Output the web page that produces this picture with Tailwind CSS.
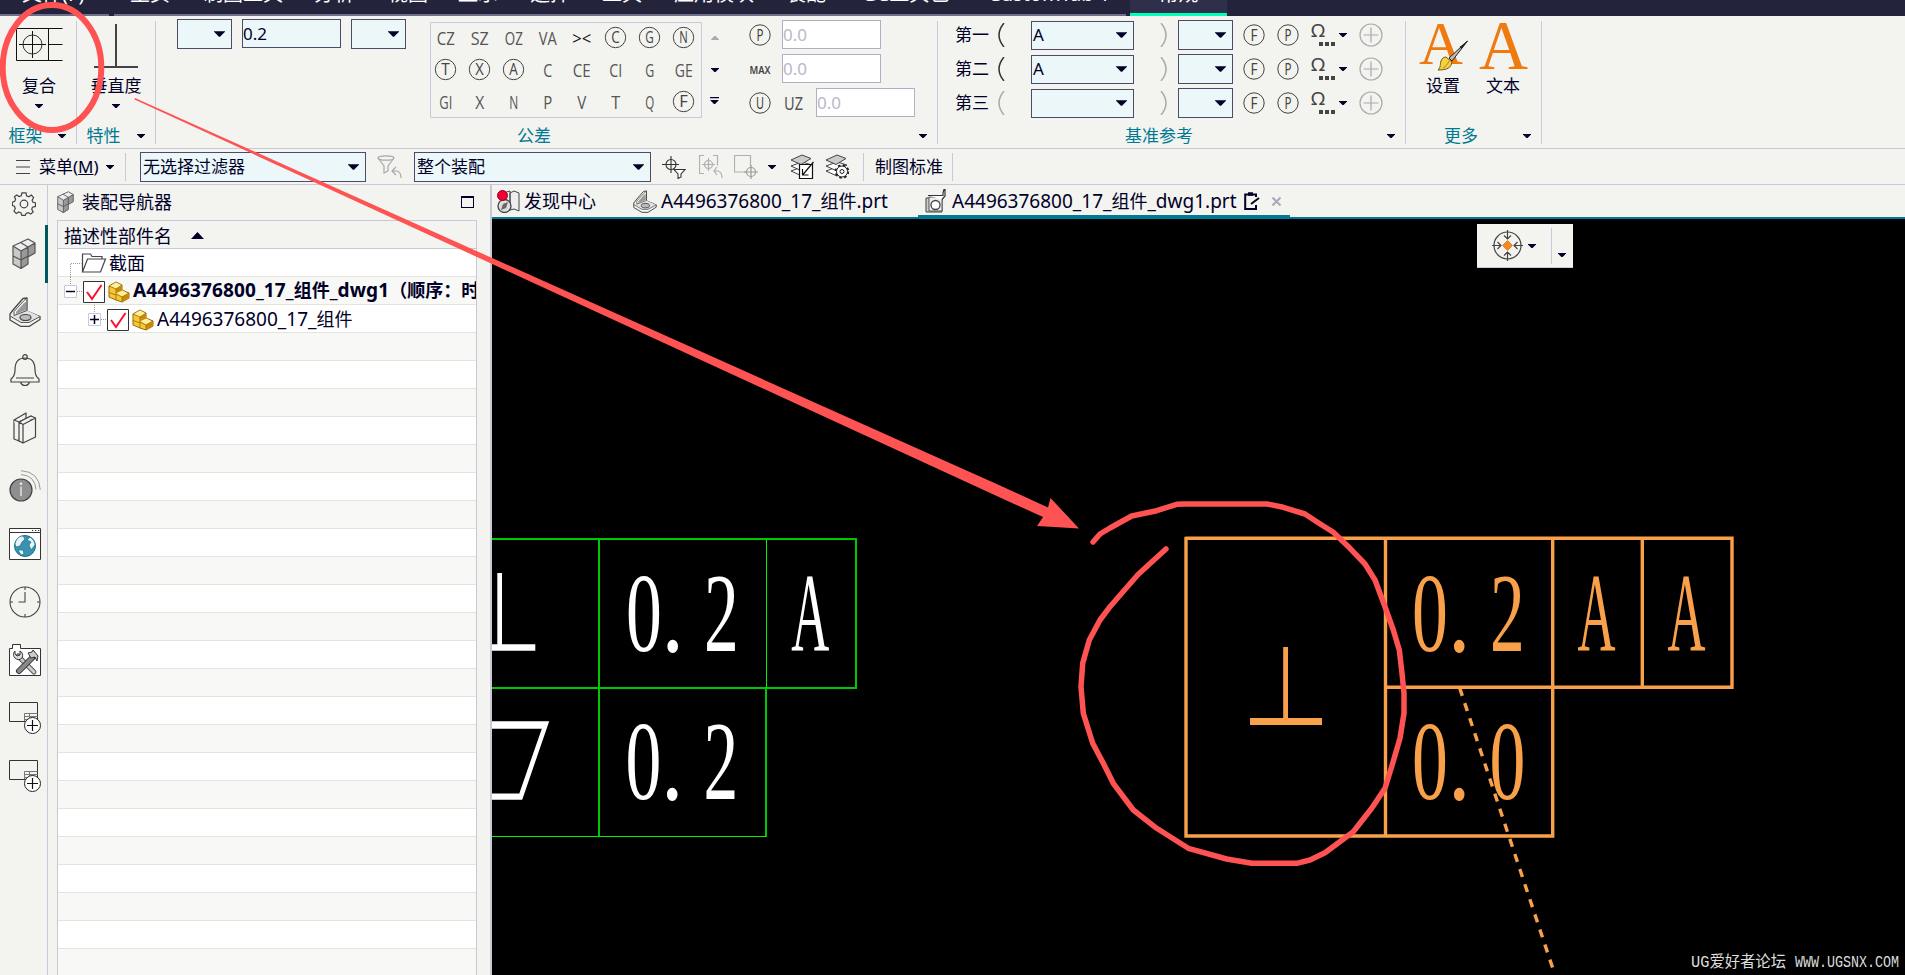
<!DOCTYPE html>
<html lang="zh-CN">
<head>
  <meta charset="UTF-8" />
  <meta name="viewport" content="width=device-width, initial-scale=1.0"/>
  <title>A4496376800_17_组件_dwg1.prt</title>
  <script src="https://cdn.jsdelivr.net/npm/@tailwindcss/browser@4"></script>
</head>
<body class="relative flex h-[975px] w-[1905px] flex-col overflow-hidden bg-[#f3f3ef] font-['Noto_Sans','Noto_Sans_CJK_SC',sans-serif] text-[17px] leading-5 text-[#000028]">

  <!-- shared icons -->
  <svg class="hidden">
    <defs>
      <linearGradient id="metal" x1="0" y1="0" x2="1" y2="1"><stop offset="0" stop-color="#f4f4f4"/><stop offset="1" stop-color="#8a8a8a"/></linearGradient>
      <linearGradient id="sheet" x1="0" y1="0" x2="1" y2="1"><stop offset="0" stop-color="#ededf2"/><stop offset="1" stop-color="#fff"/></linearGradient>
    </defs>
    <symbol id="small-arrow" viewBox="0 0 8 4"><path d="M0 0h8v.6L4.6 4H3.4L0 .6z" fill="#000028"/></symbol>
    <symbol id="big-arrow" viewBox="0 0 12 6"><path d="M0 0h12v.6L6.6 6H5.4L0 .6z" fill="#000028"/></symbol>
    <symbol id="blocks" viewBox="0 0 24 31">
      <path d="M1 8l15-7 7 4v10l-7 4v7l-7 4.500L1 26z" fill="#c9c9c9"/>
      <path d="M1 8l7.500-3.500L16 1l7 4-7 4-7 4z" fill="#eee"/>
      <path d="M9 13l7-4 7-4v10l-7 4v7l-7 4.500z" fill="#999"/>
      <path d="M1 8l15-7 7 4v10l-7 4v7l-7 4.500L1 26zM1 8l8 5 14-8M9 13v17.500M1 18l8 4 7-4M16 9v10M8.500 4.500L16 9" fill="none" stroke="#555" stroke-width="1.200" stroke-linejoin="round"/>
    </symbol>
    <symbol id="bracket" viewBox="0 0 32 30">
      <path d="M1 17L4 13 14 1.500 18 1v13l13 5.500v3L20 29.500h-8L1 23z" fill="url(#metal)" stroke="#484848" stroke-width="1.300" stroke-linejoin="round"/>
      <path d="M18 13.500l13 6-11 6h-8L1 19l4-1z" fill="#e2e2e2"/>
      <path d="M5 14.500L14.500 4 18 1M5 14.500v4L18 13.500M1 19l11 6.500h8L31 19.500" fill="none" stroke="#555" stroke-width="1"/>
      <path d="M7 15l8-9 2-1v8L7 17z" fill="#999"/>
      <ellipse cx="16.500" cy="20.500" rx="5.500" ry="3" fill="#bbb" stroke="#444" stroke-width="1.200"/>
    </symbol>
    <symbol id="cubes" viewBox="0 0 22 22">
      <path d="M1 5l7-4 6 3v5l7 3v5l-7 4-6-2-7-3z" fill="#f6c838" stroke="#9c6b00" stroke-width="1" stroke-linejoin="round"/>
      <path d="M2 5l6-3.500 5.500 2.800L8 8zM8.500 12l6-2.500 5.500 3-6 3z" fill="#fff0a0"/>
      <path d="M8 8l6-3.500v5L8.500 12zM14 16l7-3.500V17l-7 4z" fill="#c98a0c"/>
      <path d="M8 8v11M1 5l7 3 6-4M8 13l6 3 7-4M14 16v5M1 11.500l7 2.500" fill="none" stroke="#9c6b00" stroke-width=".8"/>
    </symbol>
    <symbol id="check" viewBox="0 0 22 22">
      <path d="M.5.5h21v21H.5z" fill="#fff" stroke="#333"/>
      <path d="M4 11l5 7L18.500 4" fill="none" stroke="#ff1030" stroke-width="2"/>
    </symbol>
    <symbol id="add-sheet" viewBox="0 0 32 32">
      <path d="M.5.5h28v19H.5z" fill="url(#sheet)" stroke="#333"/>
      <path d="M15.500 19v-7.500h13M15.500 14.500h13M15.500 17.500h13M20.500 11.500v6" fill="none" stroke="#777"/>
      <circle cx="23.500" cy="23.500" r="8" fill="#fff" stroke="#222"/>
      <path d="M18 23.500h11M23.500 18v11" stroke="#111" stroke-width="1.200"/>
    </symbol>
    <symbol id="layers" viewBox="0 0 24 25">
      <g stroke="#444" stroke-width="1" stroke-linejoin="round">
        <path d="M1 17l11-4 10 3-10 6z" fill="#fff"/><path d="M1 12l11-4 10 3-10 6z" fill="#fff"/><path d="M1 6l11-5 9 3.500-10 6z" fill="#ccc"/>
      </g>
    </symbol>
  </svg>

  <!-- menu bar -->
  <nav class="flex h-4 shrink-0 overflow-hidden bg-[#23233c] text-[20px] text-white">
    <div class="h-4 w-[109px] border-b-2 border-[#6f6f8a] pl-[22px]"><span class="-mt-4 block">文件(F)</span></div>
    <div class="ml-[5px] flex h-4 w-[1012px] border-b-2 border-[#6f6f8a] pl-4 whitespace-nowrap">
      <span class="-mt-4 w-[73px] shrink-0">主页</span>
      <span class="-mt-4 w-[111px] shrink-0">制图工具</span>
      <span class="-mt-4 w-[74px] shrink-0">分析</span>
      <span class="-mt-4 w-[70px] shrink-0">视图</span>
      <span class="-mt-4 w-[72px] shrink-0">显示</span>
      <span class="-mt-4 w-[72px] shrink-0">选择</span>
      <span class="-mt-4 w-[72px] shrink-0">工具</span>
      <span class="-mt-4 w-[112px] shrink-0">应用模块</span>
      <span class="-mt-4 w-[76px] shrink-0">装配</span>
      <span class="-mt-4 w-[126px] shrink-0">GC工具包</span>
      <span class="-mt-4 shrink-0">CustomTab 1</span>
    </div>
    <div class="ml-1 h-4 w-[97px] border-b-[3px] border-[#00ffb9] bg-[#2f2f4b] text-center"><span class="-mt-4 block">常规</span></div>
  </nav>

  <!-- ribbon -->
  <header class="flex h-[133px] shrink-0 border-b border-[#c8c8d8] pt-[5px]">
    <section class="flex h-[123px] w-[77px] flex-col border-r border-[#c8c8d8]">
      <div class="flex flex-1 flex-col pl-4">
        <svg class="mt-[7px] h-[34px] w-[47px]" viewBox="0 0 47 34" fill="none" stroke="#111"><path d="M46.500.5H.5v32h46M32.500.5v32M32.500 16.500h14M3 16.500h27M16.500 3v27"/><circle cx="16.500" cy="16.500" r="9.500" stroke="#333"/></svg>
        <span class="mt-[14px] pl-1.5">复合</span>
        <svg class="mt-2 ml-[19px] h-1 w-2"><use href="#small-arrow"/></svg>
      </div>
      <div class="flex h-4 items-center text-[#007a94]"><span class="flex-1 text-center leading-4">框架</span><svg class="mr-[10px] ml-[7px] h-1 w-2"><use href="#small-arrow"/></svg></div>
    </section>
    <section class="flex h-[123px] w-[79px] flex-col border-r border-[#c8c8d8]">
      <div class="flex flex-1 flex-col items-center">
        <svg class="mt-[3px] h-[44px] w-[44px]" viewBox="0 0 44 44" fill="none" stroke="#444" stroke-width="2"><path d="M22 0v42M0 43h44"/></svg>
        <span class="mt-[8px] whitespace-nowrap">垂直度</span>
        <svg class="mt-2 h-1 w-2"><use href="#small-arrow"/></svg>
      </div>
      <div class="flex h-4 items-center text-[#007a94]"><span class="flex-1 text-center leading-4">特性</span><svg class="mr-[10px] ml-[7px] h-1 w-2"><use href="#small-arrow"/></svg></div>
    </section>

    <!-- tolerance -->
    <section class="flex h-[123px] w-[782px] flex-col border-r border-[#c8c8d8]">
      <div class="flex flex-1 items-start">
        <div class="-mt-0.5 ml-[21px] flex h-[30px] w-[55px] items-center justify-end border border-[#4c4c68] bg-[#ebf7f8] pr-[6px]"><svg class="h-[6px] w-[11px]"><use href="#big-arrow"/></svg></div>
        <div class="-mt-0.5 ml-[10px] h-[29px] w-[99px] border border-[#4c4c68] bg-[#ebf7f8] leading-[28px]">0.2</div>
        <div class="-mt-0.5 ml-[10px] flex h-[30px] w-[55px] items-center justify-end border border-[#4c4c68] bg-[#ebf7f8] pr-[6px]"><svg class="h-[6px] w-[11px]"><use href="#big-arrow"/></svg></div>
        <svg id="tolerances" class="mt-px ml-6 h-[96px] w-[272px] font-['Open_Sans','Noto_Sans',sans-serif] text-[16px]" viewBox="0 0 272 96"><path d="M.5.5h271v95H.5z" fill="none" stroke="#c8c8d8"/></svg>
        <div class="mt-[15px] ml-2 flex flex-col items-center">
          <svg class="h-1 w-2 opacity-30" viewBox="0 0 8 4"><path d="M0 4h8v-.6L4.600 0H3.400L0 3.400z" fill="#000028"/></svg>
          <svg class="mt-7 h-1 w-2"><use href="#small-arrow"/></svg>
          <svg class="mt-[25px] h-[7px] w-[9px]" viewBox="0 0 9 7" fill="#000028"><path d="M0 0h9v1.200H0zM.5 3h8v.6L5 7H4L.5 3.600z"/></svg>
        </div>
        <div class="-mt-px ml-[30px] flex flex-col gap-[5px]">
          <div class="flex h-[29px] items-center">
            <svg class="h-[22px] w-[22px]" viewBox="0 0 22 22"><circle cx="11" cy="11" r="10.200" fill="none" stroke="#444"/><text x="11" y="16.500" text-anchor="middle" font-size="15.500" textLength="7" lengthAdjust="spacingAndGlyphs" fill="#444">P</text></svg>
            <div class="ml-[11px] h-[29px] w-[99px] border border-[#b0b0c4] bg-white leading-[28px] text-[#b8b8c8]">0.0</div>
          </div>
          <div class="flex h-[29px] items-center">
            <svg class="h-[22px] w-[22px]" viewBox="0 0 22 22"><text x="0.500" y="15.500" font-size="11" font-weight="600" textLength="21" lengthAdjust="spacingAndGlyphs" fill="#444">MAX</text></svg>
            <div class="ml-[11px] h-[29px] w-[99px] border border-[#b0b0c4] bg-white leading-[28px] text-[#b8b8c8]">0.0</div>
          </div>
          <div class="flex h-[29px] items-center">
            <svg class="h-[22px] w-[56px]" viewBox="0 0 56 22"><circle cx="11" cy="11" r="10.200" fill="none" stroke="#444"/><text x="11" y="16.500" text-anchor="middle" font-size="15.500" textLength="8" lengthAdjust="spacingAndGlyphs" fill="#444">U</text><text x="35" y="18" font-size="18.500" textLength="19" lengthAdjust="spacingAndGlyphs" fill="#555">UZ</text></svg>
            <div class="ml-[11px] h-[29px] w-[99px] border border-[#b0b0c4] bg-white leading-[28px] text-[#b8b8c8]">0.0</div>
          </div>
        </div>
      </div>
      <div class="flex h-4 items-center text-[#007a94]"><span class="flex-1 text-center leading-4">公差</span><svg class="mr-[10px] ml-[7px] h-1 w-2"><use href="#small-arrow"/></svg></div>
    </section>

    <!-- datum reference -->
    <section class="flex h-[123px] w-[468px] flex-col border-r border-[#c8c8d8]">
      <div id="datums" class="-mt-px flex flex-1 flex-col gap-[4px]"></div>
      <div class="flex h-4 items-center text-[#007a94]"><span class="flex-1 text-center leading-4">基准参考</span><svg class="mr-[10px] ml-[7px] h-1 w-2"><use href="#small-arrow"/></svg></div>
    </section>

    <section class="flex h-[123px] w-[136px] flex-col border-r border-[#c8c8d8]">
      <div class="flex flex-1 pl-[13px]">
        <div class="flex w-[50px] flex-col items-center">
          <svg class="mt-px h-[49px] w-[50px]" viewBox="0 0 50 49">
            <text x="0" y="42" font-family="Liberation Serif" font-size="62" textLength="44" lengthAdjust="spacingAndGlyphs" fill="#ee7a10">A</text>
            <path d="M48.500 19L30 36l3 3z" fill="#bbb" stroke="#222" stroke-width="1"/>
            <path d="M48.500 19l-8 6 2 2z" fill="#222"/>
            <path d="M27 35l6 5c-1 6-5 8-14 8 3-3 2-6 3-9 1-3 3-4 5-4z" fill="#f8d040" stroke="#6b5a10"/>
            <path d="M24 46c3-2 5-4 6-7" fill="none" stroke="#a88a18"/>
          </svg>
          <span class="mt-[5px] -ml-0.5">设置</span>
        </div>
        <div class="ml-[9px] flex w-[50px] flex-col items-center">
          <svg class="mt-px h-[49px] w-[50px]" viewBox="0 0 50 49"><text x="1" y="47" font-family="Liberation Serif" font-size="69" textLength="49" lengthAdjust="spacingAndGlyphs" fill="#ee7a10">A</text></svg>
          <span class="mt-[5px]">文本</span>
        </div>
      </div>
      <div class="flex h-4 items-center text-[#007a94]"><span class="flex-1 text-center leading-4">更多</span><svg class="mr-[10px] ml-[7px] h-1 w-2"><use href="#small-arrow"/></svg></div>
    </section>
  </header>

  <!-- selection bar -->
  <div class="flex h-9 shrink-0 items-center border-b border-[#c8c8d8]">
    <svg class="ml-4 h-[14px] w-[14px]" viewBox="0 0 14 14" stroke="#444"><path d="M0 .5h14M0 7h14M0 13.500h14"/></svg>
    <span class="ml-[9px] w-[62px]">菜单(<u>M</u>)</span>
    <svg class="ml-[5px] h-1 w-2"><use href="#small-arrow"/></svg>
    <div class="ml-[11px] h-7 w-px bg-[#c8c8d8]"></div>
    <div class="ml-[14px] flex h-[30px] w-[226px] items-center justify-between border border-[#4c4c68] bg-[#ebf7f8] pr-[6px] pl-0.5"><span>无选择过滤器</span><svg class="h-[6px] w-[11px]"><use href="#big-arrow"/></svg></div>
    <svg class="ml-[11px] h-6 w-[25px]" viewBox="0 0 25 24" fill="none" stroke="#a8a8a8" stroke-width="1.200"><ellipse cx="9" cy="3" rx="8" ry="2.200"/><path d="M1 3l6 8v7l4-2v-5l6-8M19 12l-4 4 4 4M15 16h5q4 1 4 7"/></svg>
    <div class="ml-3 flex h-[30px] w-[237px] items-center justify-between border border-[#4c4c68] bg-[#ebf7f8] pr-[6px] pl-0.5"><span>整个装配</span><svg class="h-[6px] w-[11px]"><use href="#big-arrow"/></svg></div>
    <svg class="ml-[11px] h-6 w-6" viewBox="0 0 24 24" fill="none" stroke="#333" stroke-width="1.100"><circle cx="9" cy="9.500" r="5"/><path d="M0 9.500h17M9 1v17"/><path d="M12 14.500h11l-4 4.500v3l-3 1.500V19z" fill="#fff"/></svg>
    <svg class="ml-[13px] h-6 w-6" viewBox="0 0 24 24" fill="none" stroke="#b0b0b0" stroke-width="1.200"><path d="M5 .5H.5v18H5M14 .5h4.500v10"/><circle cx="9.500" cy="9.500" r="4"/><path d="M3 9.500h13M9.500 3v13M18 12l-3 4 3 4M15 16h4q4 1 4 7"/></svg>
    <svg class="ml-[11px] h-6 w-6" viewBox="0 0 24 24" fill="none" stroke="#b0b0b0" stroke-width="1.200"><path d="M12 17H.5V.5h16V11"/><circle cx="17" cy="17" r="4.500" stroke="#999"/><path d="M10 17h14M17 10v14" stroke="#999"/></svg>
    <svg class="ml-[10px] h-1 w-2"><use href="#small-arrow"/></svg>
    <svg class="ml-[14px] h-[25px] w-6" viewBox="0 0 24 25"><use href="#layers"/><path d="M9.500 10.500h13v14h-13z" fill="#fff" stroke="#111" stroke-width="1.200"/><path d="M23.500 8L13 20.500M12.500 15v6h6" fill="none" stroke="#111" stroke-width="1.200"/></svg>
    <svg class="ml-[11px] h-[25px] w-6" viewBox="0 0 24 25"><use href="#layers"/><circle cx="17" cy="17.500" r="6.300" fill="none" stroke="#222" stroke-width="2" stroke-dasharray="2.500 2.450"/><circle cx="17" cy="17.500" r="5.500" fill="#fff" stroke="#222"/><circle cx="17" cy="17.500" r="2" fill="none" stroke="#222"/></svg>
    <div class="ml-[14px] h-7 w-px bg-[#c8c8d8]"></div>
    <span class="ml-[11px]">制图标准</span>
    <div class="ml-[9px] h-7 w-px bg-[#c8c8d8]"></div>
  </div>

  <div class="flex min-h-0 flex-1">
    <!-- resource bar -->
    <aside class="flex w-12 shrink-0 flex-col items-center border-r border-[#c8c8d8]">
      <svg class="mt-[7px] h-6 w-6" viewBox="0 0 24 24" fill="none" stroke="#444" stroke-width="1.200"><path d="M10 .8h4l.6 3 2.200 1L19.400 3l2.200 2.500-1.500 2.700.7 1.800 2.700 1v3.400l-3 .8-.8 2 1.500 2.600-2.500 2.300-2.600-1.500-2 .8-.8 2h-3.500l-.8-2.500-2.200-.9-2.500 1.400-2.300-2.300 1.300-2.600-.9-2.200-2-.8v-3.200l2.300-1 .9-2-1.200-2.500L4.600 3l2.600 1.600 2.100-.9z"/><circle cx="12" cy="12" r="3.800"/></svg>
      <div class="mt-[9px] -mr-px flex h-[58px] w-[48px] items-center justify-center border-r-[3px] border-[#00575e] pb-0.5 pl-[3px]"><svg class="h-[31px] w-6"><use href="#blocks"/></svg></div>
      <svg class="mt-[14px] ml-[3px] h-[30px] w-8"><use href="#bracket"/></svg>
      <svg class="mt-[27px] ml-0.5 h-8 w-[30px]" viewBox="0 0 30 32" fill="none" stroke="#444" stroke-width="1.200"><path d="M1 28v-3q4-3 4-9c0-9 4-12 10-12s10 3 10 12q0 6 4 9v3zM6 24h18M10.500 28q1 3.500 4.500 3.500t4.500-3.500"/><circle cx="15" cy="3" r="2.300"/></svg>
      <svg class="mt-[26px] ml-0.5 h-8 w-6" viewBox="0 0 24 32" fill="#f3f3ef" stroke="#444" stroke-width="1.200" stroke-linejoin="round"><path d="M1 8L13 1v22L6 29l-5-2z"/><path d="M6 10L18 4v22l-9 4-3-1.500z"/><path d="M1 8l5 2v18.500M6 10l4 2.500v18.500L6 29zM10 12.500L22.500 6v19L10 31zM6 10l12-6 4.500 2"/></svg>
      <svg class="mt-[26px] ml-0.5 h-8 w-8" viewBox="0 0 32 32"><circle cx="12" cy="20" r="11" fill="#8f8f8f" stroke="#444" stroke-width="1.200"/><path d="M12 16.500v9.500M12 12.500v2.500M10.800 13.700h2.400" stroke="#fff" stroke-width="1.100"/><path d="M12 4.500q14 1 15 15M12 .7q18 1 19.300 19" fill="none" stroke="#999"/></svg>
      <svg class="mt-[26px] ml-0.5 h-8 w-8" viewBox="0 0 32 32"><path d="M.5.5h31v31H.5zM.5 4.500h31" fill="#fff" stroke="#333"/><path d="M23 2.500h1.200M26 2.500h1.200M29 2.500h1.200" stroke="#333"/><circle cx="16" cy="18" r="10.500" fill="#3a93ae" stroke="#14718f"/><path d="M6 16c1-5 4-8 8-8l2 3-3 3-2 4-4 1zM21 9c3 2 5 5 5 8l-4 5-2-5 2-3-4-2zM9 22l5 0 1 4-3 1z" fill="#e9f2f4" stroke="#14718f" stroke-width=".7"/></svg>
      <svg class="mt-[26px] ml-0.5 h-8 w-8" viewBox="0 0 32 32" fill="none" stroke="#444" stroke-width="1.100"><circle cx="16" cy="16" r="15"/><path d="M16 1v3M16 28v3M1 16h3M28 16h3M16 6v10H9.500"/></svg>
      <svg class="mt-[26px] ml-0.5 h-8 w-8" viewBox="0 0 32 32"><path d="M.5 31.500v-27h3V.5h8v4h20v27z" fill="#fff" stroke="#333"/><path d="M9 12l16 16" stroke="#555" stroke-width="5" stroke-linecap="round"/><path d="M9 12l16 16" stroke="#ccc" stroke-width="3" stroke-linecap="round"/><path d="M6 7c-2 2-2 5 0 7s5 2 6.500.5S14 10 12.500 8L11 7v4l-3 1-2-2z" fill="#ddd" stroke="#333"/><path d="M24 13L10 27" stroke="#333" stroke-width="6" stroke-linecap="round"/><path d="M23 14L10 27" stroke="#888" stroke-width="4" stroke-linecap="round"/><path d="M19 9l4-1 1-2 5 6-1 5-2-4-4 1z" fill="#ccc" stroke="#333"/></svg>
      <svg class="mt-[26px] ml-0.5 h-8 w-8"><use href="#add-sheet"/></svg>
      <svg class="mt-[26px] ml-0.5 h-8 w-8"><use href="#add-sheet"/></svg>
    </aside>

    <!-- assembly navigator -->
    <section class="flex w-[444px] shrink-0 flex-col border-r-2 border-[#c8c8d8] text-[18px]">
      <div class="flex h-[35px] items-center pb-0.5 pl-[9px]">
        <svg class="h-[22px] w-[17px]"><use href="#blocks"/></svg>
        <span class="ml-2">装配导航器</span>
        <div class="mr-4 ml-auto h-3 w-[13px] border border-t-2 border-[#000028]"></div>
      </div>
      <div id="tree" class="mr-[13px] ml-[9px] flex min-h-0 flex-1 flex-col overflow-hidden border border-b-0 border-[#c8c8d8]">
        <div class="flex h-7 shrink-0 items-center border-b border-[#c8c8d8] pt-0.5 pl-1.5">描述性部件名<svg class="ml-[19px] h-[7px] w-[13px]" viewBox="0 0 13 7"><path d="M6.500 0L13 7H0z" fill="#000028"/></svg></div>
        <div class="flex h-7 shrink-0 items-center border-b border-[#e4e4dc] bg-white">
          <svg class="h-7 w-[50px]" viewBox="0 0 50 28" fill="none" stroke="#444"><path d="M12.500 28V14.500h11" stroke="#999" stroke-dasharray="1 1"/><path d="M24.500 23V5l8 0 1.500 2.500h10V10M24.500 23l5-13h18l-5 13z" stroke-width="1.200"/></svg>
          <span class="ml-px">截面</span>
        </div>
        <div class="flex h-7 shrink-0 items-center border-b border-[#e4e4dc] bg-[#f8f8f6]">
          <svg class="h-7 w-[25px] shrink-0" viewBox="0 0 25 28" fill="none"><path d="M12.500 0v8M19 14.500h5" stroke="#999" stroke-dasharray="1 1"/><path d="M6.500 8.500h12v12h-12z" fill="#fff" stroke="#c8c8d8"/><path d="M8 14.500h9" stroke="#000028" stroke-width="1.500"/></svg>
          <svg class="mt-0.5 h-[22px] w-[22px] shrink-0"><use href="#check"/></svg>
          <svg class="mt-0.5 ml-[3px] h-[22px] w-[22px] shrink-0"><use href="#cubes"/></svg>
          <span class="ml-[3px] shrink-0 pb-0.5 font-bold whitespace-nowrap"><span class="text-[19px] tracking-[0.1px]">A4496376800_17_</span>组件<span class="text-[19px] tracking-[0.1px]">_dwg1</span>（顺序：时间顺序）</span>
        </div>
        <div class="flex h-7 shrink-0 items-center border-b border-[#e4e4dc] bg-white">
          <svg class="h-7 w-[49px] shrink-0" viewBox="0 0 49 28" fill="none"><path d="M36.500 0v8M43 14.500h6" stroke="#999" stroke-dasharray="1 1"/><path d="M30.500 8.500h12v12h-12z" fill="#fff" stroke="#c8c8d8"/><path d="M32 14.500h9M36.500 10v9" stroke="#000028" stroke-width="1.500"/></svg>
          <svg class="mt-0.5 h-[22px] w-[22px] shrink-0"><use href="#check"/></svg>
          <svg class="mt-0.5 ml-[3px] h-[22px] w-[22px] shrink-0"><use href="#cubes"/></svg>
          <span class="ml-[3px] shrink-0 whitespace-nowrap"><span class="text-[19px]">A4496376800_17_</span>组件</span>
        </div>
      </div>
    </section>

    <!-- graphics window -->
    <main class="flex min-w-0 flex-1 flex-col">
      <div class="flex h-[34px] shrink-0 border-b-2 border-[#007a94] text-[18px] whitespace-nowrap">
        <div class="flex w-[138px] items-center pl-[5px]">
          <svg class="h-[23px] w-[23px]" viewBox="0 0 23 23"><path d="M6 3l7-2v19l-7 2zM13 3l4-2 5 2v18l-5-2-4 1z" fill="#eee" stroke="#444"/><circle cx="7.500" cy="16" r="6.500" fill="#ddd" stroke="#444" stroke-width="1.300"/><path d="M11 12l-2 6-5 2 2-6z" fill="#666"/><circle cx="5.500" cy="5.500" r="5" fill="#f00030" stroke="#a00020"/></svg>
          <span class="ml-1">发现中心</span>
        </div>
        <div class="flex w-[288px] items-center pl-[3px]">
          <svg class="h-[23px] w-6"><use href="#bracket"/></svg>
          <span class="ml-1"><span class="text-[19px]">A4496376800_17_</span>组件<span class="text-[19px]">.prt</span></span>
        </div>
        <div class="flex h-[32px] w-[372px] items-center border-b-2 border-[#007a94] pt-0.5 pl-[7px]">
          <svg class="h-[24px] w-[21px]" viewBox="0 0 21 24"><path d="M1 9h16v14H1z" fill="#ccc" stroke="#444"/><path d="M4 8h13v14H4z" fill="#eee" stroke="#555"/><path d="M3 6.500h15V4l1-3.500h1V7l-3 3.500" fill="#fff" stroke="#333" stroke-width="1.200"/><circle cx="10.500" cy="16" r="4.500" fill="#fff" stroke="#444" stroke-width="1.300"/></svg>
          <span class="ml-[6px]"><span class="text-[19px]">A4496376800_17_</span>组件<span class="text-[19px]">_dwg1.prt</span></span>
          <svg class="ml-[7px] h-[18px] w-4" viewBox="0 0 16 18" fill="none" stroke="#000028" stroke-width="2"><path d="M12 13v4H1.200V2.500H12V5M7 12l8-6"/><path d="M4 2h5" stroke-width="3.500"/></svg>
          <svg class="ml-3 h-[9px] w-[9px]" viewBox="0 0 9 9" stroke="#a8a8b8" stroke-width="2"><path d="M.5.5l8 8M8.500.5l-8 8"/></svg>
        </div>
      </div>
      <div class="relative min-h-0 flex-1 bg-black">
        <svg class="block h-[756px] w-[1413px] font-['Liberation_Serif',serif]" viewBox="492 219 1413 756">
          <!-- green frame -->
          <g fill="none" stroke="#00c800" stroke-width="2">
            <path d="M492 539h364v149H492M599 539v297M766 688v149"/>
            <path d="M492 836.500h274M766.500 539v149" stroke="#00f000" stroke-width="1"/>
          </g>
          <path d="M497.300 573h4.700v71.300h33.300v6.400H492v-6.400h5.300zM492 721.300h57.200l-27 78.400H492v-6.200h27.300l22.500-64.800H492z" fill="#fff"/>
          <g fill="#fff" font-size="112">
            <text transform="translate(626 650.500) scale(.64 1)">0</text>
            <text transform="translate(661.500 650.500) scale(.8 1)">.</text>
            <text transform="translate(704 650.500) scale(.62 1)">2</text>
            <text transform="translate(791.300 650.500) scale(.47 1)">A</text>
            <text transform="translate(625.500 799) scale(.64 1)">0</text>
            <text transform="translate(661 799) scale(.8 1)">.</text>
            <text transform="translate(703.500 799) scale(.62 1)">2</text>
          </g>
          <!-- orange frame being placed -->
          <g fill="none" stroke="#f8a14a" stroke-width="3.400">
            <path d="M1186 538.300h546v149h-346.500M1186 536.800v299.200h366.700V538M1385.500 538v298M1642.300 538v149"/>
            <path d="M1459.700 688l93.300 281" stroke-width="3.400" stroke-dasharray="8.300 7.600"/>
          </g>
          <path d="M1283.200 647h4.800v71h34v7h-72v-7h33.200z" fill="#f8a14a"/>
          <g fill="#f8a14a" font-size="112">
            <text transform="translate(1412 650.500) scale(.64 1)">0</text>
            <text transform="translate(1448 650.500) scale(.8 1)">.</text>
            <text transform="translate(1490 650.500) scale(.62 1)">2</text>
            <text transform="translate(1577.500 650.500) scale(.47 1)">A</text>
            <text transform="translate(1667.500 650.500) scale(.47 1)">A</text>
            <text transform="translate(1412 799) scale(.64 1)">0</text>
            <text transform="translate(1448 799) scale(.8 1)">.</text>
            <text transform="translate(1489.500 799) scale(.64 1)">0</text>
          </g>
          <g font-size="16" font-family="Liberation Mono, Noto Sans CJK SC" fill="#ddd">
            <text x="1691" y="967" textLength="95" lengthAdjust="spacingAndGlyphs">UG爱好者论坛</text>
            <text x="1795" y="967" textLength="104" lengthAdjust="spacingAndGlyphs">WWW.UGSNX.COM</text>
          </g>
        </svg>
        <!-- floating toolbar -->
        <div class="absolute top-[5px] left-[985px] flex h-11 w-24 border-b border-[#c8c8d8] bg-[#f3f3ef]">
          <svg class="mt-[6px] ml-[15px] h-[31px] w-[31px]" viewBox="0 0 31 31" fill="none" stroke="#444" stroke-width="1.200"><circle cx="15.500" cy="15.500" r="13.500"/><path d="M15.500 0v8.500M12 5.500l3.500 3.500L19 5.500M15.500 31v-8.500M12 25.500l3.500-3.500 3.500 3.500M0 15.500h8.500M5.500 12L9 15.500 5.500 19M31 15.500h-8.500M25.500 12L22 15.500l3.500 3.500"/><path d="M15.500 10.500l5 5-5 5-5-5z" fill="#f48a1c" stroke="#d06000" stroke-width=".6"/></svg>
          <svg class="mt-5 ml-[5px] h-1 w-2"><use href="#small-arrow"/></svg>
          <div class="mt-1 ml-[15px] h-9 w-px bg-[#c8c8d8]"></div>
          <svg class="mt-[29px] ml-[6px] h-1 w-2"><use href="#small-arrow"/></svg>
        </div>
      </div>
    </main>
  </div>

  <!-- red markup -->
  <svg class="pointer-events-none absolute top-0 left-0 h-[975px] w-[1905px]" viewBox="0 0 1905 975" fill="none" stroke="#ff5252">
    <ellipse cx="52" cy="67.500" rx="49.300" ry="62.500" stroke-width="6"/>
    <path d="M135 98l865 387.500 48 22 2.500-9.500 28.500 30.500-42-2.500 6-9-43-19.500L134.500 99.500z" fill="#ff5252" stroke="none"/>
    <polyline points="1093,542 1100,534 1110,528 1131.700,516 1156.700,510.700 1176.700,504.300 1185,504 1267.300,504 1283.300,507.300 1305,514 1316.700,521.700 1333.300,532.300 1350,548.300 1365,564 1375,580 1385,606.700 1393.300,630 1399.300,650 1402,673.300 1404,693.300 1404,713.300 1400,738.300 1392.700,763.300 1385,788.300 1371.700,808.300 1353.300,831.700 1325,852.700 1310,860 1296.700,863.300 1251.700,863.300 1226.700,859 1188.300,848.300 1156.700,828.300 1133.300,810 1113.300,783.300 1103.300,763.300 1092.700,743.300 1083.300,713.300 1081,686.700 1082.700,663.300 1089.300,640 1100,620 1110,606.700 1121.700,593.300 1138.300,574.300 1166,549" stroke-width="5.500" stroke-linecap="round" stroke-linejoin="round"/>
  </svg>

  <script>
    // tolerance symbols, "o" marks the circled ones
    const symbols = ["CZ", "SZ", "OZ", "VA", "><", "oC", "oG", "oN",
                     "oT", "oX", "oA", "C", "CE", "CI", "G", "GE",
                     "GI", "X", "N", "P", "V", "T", "Q", "oF"];
    const box = document.getElementById("tolerances");
    let cells = "";
    symbols.forEach((s, i) => {
      const x = 15.8 + (i % 8) * 34;
      const y = 16 + Math.floor(i / 8) * 32;
      const label = s.replace("o", "").replace("><", "&gt;&lt;");
      const w = s === "><" ? 19 : s.endsWith("I") ? 13 : s.length === 2 && s[0] !== "o" ? 18 : 9;
      if (s[0] === "o") {
        cells += `<circle cx="${x - 0.3}" cy="${y - 0.5}" r="10.2" fill="none" stroke="#444"/>`;
        cells += `<text x="${x - 0.3}" y="${y + 5.3}" text-anchor="middle" font-size="16" textLength="8.5" lengthAdjust="spacingAndGlyphs" fill="#444">${label}</text>`;
      } else {
        cells += `<text x="${x}" y="${y + 6.5}" text-anchor="middle" font-size="19" textLength="${w}" lengthAdjust="spacingAndGlyphs" fill="${s === "><" ? "#111" : "#555"}">${label}</text>`;
      }
    });
    box.innerHTML += cells;

    const circled = (c) => `<svg class="ml-[12px] h-[22px] w-[22px] shrink-0" viewBox="0 0 22 22"><circle cx="11" cy="11" r="10.2" fill="none" stroke="#444"/><text x="11" y="16.500" text-anchor="middle" font-size="15.500" textLength="7" lengthAdjust="spacingAndGlyphs" fill="#444">${c}</text></svg>`;

    const datums = [["第一", "A", "#333"], ["第二", "A", "#333"], ["第三", "", "#aaa"]];
    document.getElementById("datums").innerHTML = datums.map(([name, value, color]) => `
      <div class="flex h-[30px] items-center">
        <span class="ml-[17px] w-[34px] shrink-0">${name}</span>
        <svg class="ml-[9px] h-6 w-[7px] shrink-0" viewBox="0 0 7 24" fill="none" stroke="${color}" stroke-width="1.500"><path d="M6 0q-10 12 0 24"/></svg>
        <div class="ml-[26px] flex h-[29px] w-[103px] shrink-0 items-center justify-between border border-[#4c4c68] bg-[#ebf7f8] pr-[6px] pl-px"><span>${value}</span><svg class="h-[6px] w-[11px]"><use href="#big-arrow"/></svg></div>
        <svg class="ml-[26px] h-6 w-[7px] shrink-0" viewBox="0 0 7 24" fill="none" stroke="#aaa" stroke-width="1.500"><path d="M1 0q10 12 0 24"/></svg>
        <div class="ml-[11px] flex h-[30px] w-[55px] shrink-0 items-center justify-end border border-[#4c4c68] bg-[#ebf7f8] pr-[6px]"><svg class="h-[6px] w-[11px]"><use href="#big-arrow"/></svg></div>
        <div class="-ml-0.5 flex">${circled("F")}${circled("P")}</div>
        <svg class="ml-[12px] h-6 w-6 shrink-0" viewBox="0 0 24 24" fill="#444"><text x="0" y="13.500" font-size="18" textLength="14" lengthAdjust="spacingAndGlyphs">Ω</text><path d="M8 19h4v4H8zM14 19h4v4h-4zM20 19h4v4h-4z"/></svg>
        <svg class="ml-1 h-1 w-2 shrink-0"><use href="#small-arrow"/></svg>
        <svg class="ml-3 h-6 w-6 shrink-0" viewBox="0 0 24 24" fill="none" stroke="#aaa" stroke-width="1.200"><circle cx="12" cy="12" r="11"/><path d="M4.500 12h15M12 4.500v15"/></svg>
      </div>`).join("");

    // empty striped rows below the tree
    const tree = document.getElementById("tree");
    for (let i = 0; i < 24; i++) {
      tree.insertAdjacentHTML("beforeend", i % 2
        ? `<div class="h-7 shrink-0 border-b border-[#e4e4dc] bg-white"></div>`
        : `<div class="h-7 shrink-0 border-b border-[#e4e4dc] bg-[#f8f8f6]"></div>`);
    }
  </script>
</body>
</html>
